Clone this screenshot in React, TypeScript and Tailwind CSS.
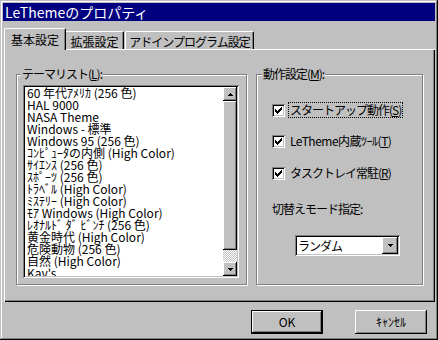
import React from "react";

const items = [
  "60 年代ｱﾒﾘｶ (256 色)",
  "HAL 9000",
  "NASA Theme",
  "Windows - 標準",
  "Windows 95 (256 色)",
  "ｺﾝﾋﾟｭｰﾀの内側 (High Color)",
  "ｻｲｴﾝｽ (256 色)",
  "ｽﾎﾟｰﾂ (256 色)",
  "ﾄﾗﾍﾞﾙ (High Color)",
  "ﾐｽﾃﾘｰ (High Color)",
  "ﾓｱ Windows (High Color)",
  "ﾚｵﾅﾙﾄﾞ ﾀﾞ ﾋﾞﾝﾁ (256 色)",
  "黄金時代 (High Color)",
  "危険動物 (256 色)",
  "自然 (High Color)",
  "Kay's",
];

function UpArrow() {
  return (
    <svg width="5" height="3" viewBox="0 0 5 3" shapeRendering="crispEdges">
      <path d="M2 0h1v1h1v1h1v1H0V2h1V1h1z" fill="#000" />
    </svg>
  );
}

function DownArrow() {
  return (
    <svg width="5" height="3" viewBox="0 0 5 3" shapeRendering="crispEdges">
      <path d="M0 0h5v1H4v1H3v1H2V2H1V1H0z" fill="#000" />
    </svg>
  );
}

function Check() {
  return (
    <svg width="7" height="7" viewBox="0 0 7 7" shapeRendering="crispEdges">
      <path
        d="M6 0h1v1h-1z M5 1h2v1h-2z M0 2h1v1h-1z M4 2h3v1h-3z M0 3h2v1h-2z M3 3h3v1h-3z M0 4h5v1h-5z M1 5h3v1h-3z M2 6h1v1h-1z"
        fill="#000"
      />
    </svg>
  );
}

function Checkbox() {
  return (
    <div className="w-[13px] h-[13px] shrink-0 bg-white shadow-[inset_1px_1px_#808080,inset_-1px_-1px_#fff,inset_2px_2px_#000,inset_-2px_-2px_#c0c0c0] flex items-center justify-center">
      <Check />
    </div>
  );
}

export default function App() {
  return (
    <div className="w-[438px] h-[340px] bg-[#c0c0c0] p-[3px] font-['Noto_Sans_CJK_JP',sans-serif] text-black shadow-[inset_-1px_-1px_#000,inset_1px_1px_#c0c0c0,inset_-2px_-2px_#808080,inset_2px_2px_#fff] flex flex-col overflow-hidden">
      {/* title bar */}
      <div className="h-[18px] bg-[#000080] text-white text-[14px] leading-[18px] pl-[2px] whitespace-nowrap">
        LeThemeのプロパティ
      </div>

      <div className="mt-[7px] pl-[1px] flex flex-col">
        {/* tabs */}
        <div className="flex items-end h-[21px] relative z-10 text-[12px] leading-[14px] whitespace-nowrap">
          <div className="w-[62px] h-[22px] -mb-[1px] bg-[#c0c0c0] border-l border-t border-white border-r border-r-black rounded-t-[2px] shadow-[inset_-1px_0_#808080] flex justify-center pt-[4px]">
            基本設定
          </div>
          <div className="w-[58px] h-[18px] bg-[#c0c0c0] border-t border-white border-r border-r-black rounded-tr-[2px] shadow-[inset_-1px_0_#808080] flex justify-center pt-[3px]">
            拡張設定
          </div>
          <div className="ml-[1px] w-[129px] h-[18px] bg-[#c0c0c0] border-l border-t border-white border-r border-r-black rounded-t-[2px] shadow-[inset_-1px_0_#808080] flex justify-center pt-[3px] tracking-[-1px]">
            アドインプログラム設定
          </div>
        </div>

        {/* panel */}
        <div className="w-[431px] h-[253px] shadow-[inset_1px_1px_#fff,inset_-1px_-1px_#000,inset_-2px_-2px_#808080] pt-[25px] pl-[12px] flex items-start">
          {/* theme list group */}
          <div className="relative w-[231px] h-[211px] border border-[#808080] shadow-[inset_1px_1px_#fff,1px_1px_#fff] pt-[10px] pl-[6px]">
            <span className="absolute top-[-8px] left-[4px] px-[1px] bg-[#c0c0c0] text-[12px] leading-[14px] tracking-[-1px] whitespace-nowrap">
              テーマリスト(<span className="underline">L</span>):
            </span>
            <div className="w-[216px] h-[193px] p-[2px] bg-white shadow-[inset_1px_1px_#808080,inset_-1px_-1px_#fff,inset_2px_2px_#000,inset_-2px_-2px_#c0c0c0] flex">
              <div className="flex-1 overflow-hidden pl-[2px] text-[12px] leading-[12px] whitespace-nowrap">
                {items.map((t) => (
                  <div key={t} className="h-[12px]">
                    {t}
                  </div>
                ))}
              </div>
              <div className="w-[14px] flex flex-col">
                <div className="h-[14px] bg-[#c0c0c0] shadow-[inset_-1px_-1px_#000,inset_1px_1px_#fff,inset_-2px_-2px_#808080] flex items-center justify-center">
                  <UpArrow />
                </div>
                <div className="h-[149px] bg-[#c0c0c0] shadow-[inset_-1px_-1px_#000,inset_1px_1px_#fff,inset_-2px_-2px_#808080]" />
                <div className="h-[12px] bg-[conic-gradient(#fff_90deg,#c0c0c0_90deg_180deg,#fff_180deg_270deg,#c0c0c0_270deg)] bg-[length:2px_2px]" />
                <div className="h-[14px] bg-[#c0c0c0] shadow-[inset_-1px_-1px_#000,inset_1px_1px_#fff,inset_-2px_-2px_#808080] flex items-center justify-center">
                  <DownArrow />
                </div>
              </div>
            </div>
          </div>

          {/* behaviour group */}
          <div className="relative ml-[9px] w-[167px] h-[211px] border border-[#808080] shadow-[inset_1px_1px_#fff,1px_1px_#fff] pt-[27px] pl-[15px] text-[12px] leading-[14px] whitespace-nowrap">
            <span className="absolute top-[-8px] left-[5px] px-[1px] bg-[#c0c0c0] tracking-[-1px]">
              動作設定(<span className="underline">M</span>):
            </span>
            <div className="flex items-center h-[16px]">
              <Checkbox />
              <span className="ml-[3px] border border-dotted border-black px-[1px] tracking-[-1px]">
                スタートアップ動作(<span className="underline">S</span>)
              </span>
            </div>
            <div className="flex items-center h-[16px] mt-[15px]">
              <Checkbox />
              <span className="ml-[3px] border border-transparent px-[1px] tracking-[-0.5px]">
                LeTheme内蔵ﾂｰﾙ(<span className="underline">T</span>)
              </span>
            </div>
            <div className="flex items-center h-[16px] mt-[16px]">
              <Checkbox />
              <span className="ml-[3px] border border-transparent px-[1px] tracking-[-1px]">
                タスクトレイ常駐(<span className="underline">R</span>)
              </span>
            </div>
            <div className="h-[16px] mt-[20px] flex items-center tracking-[-1px]">切替えモード指定:</div>
            <div className="ml-[23px] mt-[18px] w-[105px] h-[21px] p-[2px] bg-white shadow-[inset_1px_1px_#808080,inset_-1px_-1px_#fff,inset_2px_2px_#000,inset_-2px_-2px_#c0c0c0] flex">
              <div className="flex-1 pl-[1px] leading-[17px] tracking-[-1px]">ランダム</div>
              <div className="w-[16px] h-[17px] bg-[#c0c0c0] shadow-[inset_-1px_-1px_#000,inset_1px_1px_#fff,inset_-2px_-2px_#808080] flex items-center justify-center">
                <DownArrow />
              </div>
            </div>
          </div>
        </div>
      </div>

      {/* buttons */}
      <div className="flex justify-end gap-[32px] pr-[8px] mt-[8px] text-[12px]">
        <div className="w-[72px] h-[24px] border border-black">
          <div className="w-full h-full bg-[#c0c0c0] shadow-[inset_-1px_-1px_#000,inset_1px_1px_#fff,inset_-2px_-2px_#808080] flex items-center justify-center">
            OK
          </div>
        </div>
        <div className="w-[72px] h-[24px] bg-[#c0c0c0] shadow-[inset_-1px_-1px_#000,inset_1px_1px_#fff,inset_-2px_-2px_#808080] flex items-center justify-center">
          ｷｬﾝｾﾙ
        </div>
      </div>
    </div>
  );
}
